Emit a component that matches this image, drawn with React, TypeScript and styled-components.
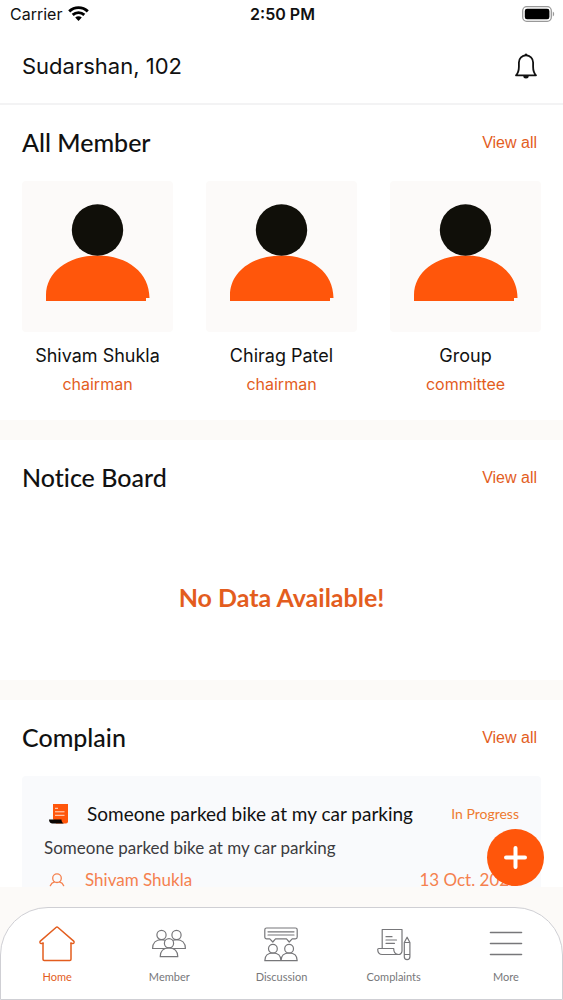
import React from "react";
import styled, { createGlobalStyle } from "styled-components";

const ORANGE = "#ff560b";
const ORANGE_TEXT = "#e35d1e";
const UI = `Inter, "Liberation Sans", sans-serif`;
const ROUNDED = `Lato, "Noto Sans", sans-serif`;

const GlobalStyle = createGlobalStyle`
  *, *::before, *::after { box-sizing: border-box; }
  body { margin: 0; background: #fcfaf8; color: #111; font-family: ${ROUNDED}; font-variant-ligatures: none; }
  h1, h2, h3, p, ul { margin: 0; padding: 0; }
  ul { list-style: none; }
  svg { display: block; }
`;

const Screen = styled.div`
  height: 100vh;
  display: flex;
  flex-direction: column;
  position: relative;
`;

const StatusBar = styled.div`
  display: grid;
  grid-template-columns: 1fr auto 1fr;
  align-items: center;
  height: 28px;
  padding: 0 8px 0 10px;
  background: #fff;
  font: 400 16px/28px ${UI};
  flex: none;
`;

const Carrier = styled.div`
  display: flex;
  align-items: center;
  gap: 6px;
`;

const Clock = styled.time`
  font-weight: 600;
`;

const Battery = styled.div`
  justify-self: end;
`;

const Header = styled.header`
  display: flex;
  align-items: center;
  justify-content: space-between;
  height: 77px;
  padding: 0 25px 0 22px;
  background: #fff;
  border-bottom: 2px solid #f3f3f4;
  flex: none;
`;

const Greeting = styled.h1`
  font: 400 22px/30px ${UI};
`;

const IconButton = styled.button`
  border: 0;
  padding: 0;
  background: none;
  color: #111;
  cursor: pointer;
`;

const Content = styled.main`
  flex: 1;
  min-height: 0;
  overflow: hidden;
  display: flex;
  flex-direction: column;
  gap: 20px;
`;

const Section = styled.section`
  background: #fff;
  padding: 20px 22px;
  flex: none;
`;

const SectionHead = styled.div`
  display: flex;
  align-items: center;
  justify-content: space-between;
  height: 36px;
  padding-right: 4px;
`;

const SectionTitle = styled.h2`
  font-size: 25px;
  line-height: 32px;
  font-weight: 500;
  padding-bottom: 2px;
`;

const ViewAll = styled.a`
  font: 400 16px/24px "Liberation Sans", Arial, sans-serif;
  color: ${ORANGE_TEXT};
  text-decoration: none;
`;

const MemberList = styled.ul`
  display: flex;
  justify-content: space-between;
  padding-top: 20px;
`;

const MemberCard = styled.li`
  width: 151px;
  text-align: center;
  font-family: ${UI};
`;

const Avatar = styled.div`
  background: #fcfaf9;
  border-radius: 4px;
`;

const MemberName = styled.h3`
  margin-top: 10px;
  font-size: 18px;
  line-height: 28px;
  font-weight: 400;
`;

const MemberRole = styled.p`
  font-size: 16px;
  line-height: 28px;
  color: ${ORANGE_TEXT};
  padding-bottom: 2px;
`;

const Empty = styled.p`
  padding: 84px 0 46px;
  text-align: center;
  font-size: 25px;
  line-height: 34px;
  font-weight: 700;
  color: ${ORANGE_TEXT};
`;

const ComplaintCard = styled.article`
  margin-top: 20px;
  padding: 22px 22px 20px;
  background: #f9fafc;
  border-radius: 4px;
`;

const ComplaintTop = styled.div`
  display: grid;
  grid-template-columns: 43px 1fr auto;
  align-items: center;
`;

const IconSlot = styled.span`
  padding-left: 5px;
`;

const ComplaintTitle = styled.h3`
  font-size: 19px;
  line-height: 32px;
  font-weight: 400;
`;

const Status = styled.span`
  font-size: 14px;
  line-height: 20px;
  color: #ee7a30;
`;

const ComplaintText = styled.p`
  font-size: 17px;
  line-height: 36px;
  color: #3c3c40;
`;

const ComplaintMeta = styled.div`
  display: grid;
  grid-template-columns: 41px 1fr auto;
  align-items: center;
  font-size: 17px;
  line-height: 28px;
  color: #f5814e;
`;

const AddButton = styled.button`
  position: absolute;
  right: 19px;
  bottom: 114px;
  width: 57px;
  height: 57px;
  display: grid;
  place-items: center;
  border: 0;
  padding: 0;
  border-radius: 50%;
  background: ${ORANGE};
  cursor: pointer;
`;

const TabArea = styled.div`
  flex: none;
  padding-top: 20px;
`;

const TabBar = styled.nav`
  display: grid;
  grid-template-columns: repeat(5, 1fr);
  height: 93px;
  border: 1px solid #cfcfd4;
  border-radius: 48px 48px 0 0;
  background: #fff;
`;

const Tab = styled.a<{ $active?: boolean }>`
  display: flex;
  flex-direction: column;
  align-items: center;
  gap: 7px;
  padding-top: 18px;
  color: ${(p) => (p.$active ? ORANGE_TEXT : "#77777a")};
  font-size: 11px;
  line-height: 16px;
  text-decoration: none;
`;

const WifiIcon = () => (
  <svg width="21" height="16" viewBox="0 0 21 16" fill="none" stroke="#000" strokeWidth="2.9">
    <path d="M1.2 5.4C6.5.4 14.5.4 19.8 5.4" />
    <path d="M4.700 8.900c3.300-3 8.300-3 11.600 0" />
    <path d="M7.200 11.500c1.900-1.700 4.700-1.700 6.600 0L10.500 15z" fill="#000" stroke="none" />
  </svg>
);

const BatteryIcon = () => (
  <svg width="33" height="16" viewBox="0 0 33 16">
    <rect x=".7" y=".7" width="28.6" height="14.6" rx="4" fill="none" stroke="#999" strokeWidth="1.3" />
    <rect x="2.8" y="2.800" width="24.6" height="10.4" rx="2.2" />
    <path d="M30.800 5.500c1.800.8 1.800 4.200 0 5z" fill="#999" />
  </svg>
);

const BellIcon = () => (
  <svg width="24" height="26" viewBox="0 0 24 26" fill="none" stroke="currentColor" strokeWidth="1.8">
    <path d="M2 22.300h20c-2.500-2.500-2.900-5-2.900-8.500V9.500a7.100 7.100 0 0 0-14.200 0v4.300c0 3.500-.4 6-2.900 8.500z" strokeLinejoin="round" />
    <path d="M10.400 2.400a1.600 1.900 0 0 1 3.200 0zM9.300 23h5.400a2.700 2.500 0 0 1-5.400 0z" fill="currentColor" stroke="none" />
  </svg>
);

const AvatarArt = () => (
  <svg width="100%" viewBox="0 0 151 151" aria-hidden="true">
    <path d="M24 120V114C24 92 45 74.500 75.500 74.500S127.500 92 127.500 117H124v3z" fill={ORANGE} />
    <circle cx="75.5" cy="49" r="25.7" fill="#100f09" />
  </svg>
);

const ScrollIcon = () => (
  <svg width="20" height="20" viewBox="0 0 20 20" aria-hidden="true">
    <path d="M4 0h15v17.500a2 2 0 0 1-2 2H7L4 15z" fill={ORANGE} />
    <path d="M0 15.500h12.500c0 2 .8 3.500 2.500 4H3.500C1.500 19.500 0 18 0 15.500z" fill="#0a0502" />
    <path d="M6 4.300h3M6 7.800h9.500M6 11.300h9.500" stroke="#ffe1cf" strokeWidth="1" />
  </svg>
);

const PersonIcon = () => (
  <svg width="16" height="14" viewBox="0 0 16 14" fill="none" stroke="currentColor" strokeWidth="1.3" strokeLinecap="round">
    <circle cx="8" cy="5.2" r="4.3" />
    <path d="M1.300 12.700c.7-2 2-3.200 4.300-3.800M14.700 12.700c-.7-2-2-3.200-4.300-3.800" />
  </svg>
);

const TabSvg = ({ children }: { children: React.ReactNode }) => (
  <svg width="36" height="36" viewBox="0 0 36 36" fill="none" stroke="currentColor" strokeWidth="1.2" strokeLinejoin="round" strokeLinecap="round" aria-hidden="true">
    {children}
  </svg>
);

const HomeIcon = () => (
  <TabSvg>
    <g strokeWidth="1.5">
      <path d="M4 17v16.200c0 .8.4 1.200 1.200 1.200h25.600c.8 0 1.200-.4 1.200-1.200V17" />
      <path d="M4 17.200c-1 .6-2.400.5-2.900-.4-.3-.7-.1-1.400.5-1.900L17 1.500c.7-.6 1.300-.6 2 0l15.400 13.400c.6.5.8 1.200.5 1.900-.5.900-1.900 1-2.900.4" />
    </g>
  </TabSvg>
);

const MemberIcon = () => (
  <TabSvg>
    <circle cx="10.5" cy="9" r="4.6" />
    <circle cx="25.5" cy="9" r="4.6" />
    <circle cx="18" cy="17.2" r="4.6" />
    <path d="M13.500 22.500H1.600c0-5.500 3.500-8.900 8.900-8.900 1.200 0 2.300.2 3.200.6M22.500 22.500h11.900c0-5.500-3.500-8.900-8.900-8.900-1.200 0-2.300.2-3.200.6" />
    <path d="M9.200 30.700c0-5.500 3.400-8.900 8.800-8.900s8.800 3.400 8.800 8.900z" />
  </TabSvg>
);

const DiscussionIcon = () => (
  <TabSvg>
    <path d="M3.600 2h28.800c1 0 1.800.8 1.800 1.800v7.200c0 1-.8 1.800-1.800 1.800h-3.200L26.200 16l-2.700-3.200h-11L9.800 16l-3-3.200H3.600c-1 0-1.800-.8-1.800-1.800V3.800c0-1 .8-1.800 1.800-1.800z" />
    <path d="M5 5.800h26M5 9h26" />
    <circle cx="9.9" cy="22.8" r="4.4" />
    <circle cx="26.1" cy="22.8" r="4.4" />
    <path d="M1.800 34.700c0-5.200 3-7.700 8.100-7.700s8.100 2.500 8.100 7.700zM18 34.700c0-5.200 3-7.700 8.100-7.700s8.100 2.500 8.100 7.700z" />
  </TabSvg>
);

const ComplaintsIcon = () => (
  <TabSvg>
    <path d="M6.200 22.500V3.500H26v21.500a3.500 3.500 0 0 1-3.500 3.500" />
    <path d="M1.700 23.500c0-.8.300-1 1-1h15c0 3.200 1 6 4.800 6H6.200C3.300 28.500 1.700 26.500 1.700 23.500z" />
    <path d="M10 10.700h6M10 14h10.500M10 17.300h8.500" />
    <path d="M28.300 16.500l2.800-5.300 2.800 5.300v14.300a2.800 2.800 0 0 1-5.600 0zM28.300 16.500h5.600M28.300 28.500h5.600" />
  </TabSvg>
);

const MoreIcon = () => (
  <TabSvg>
    <path d="M2.500 6.500h31M2.500 17.500h31M2.500 28.500h31" strokeWidth="1.6" />
  </TabSvg>
);

const members = [
  { name: "Shivam Shukla", role: "chairman" },
  { name: "Chirag Patel", role: "chairman" },
  { name: "Group", role: "committee" },
];

const tabs = [
  { label: "Home", Icon: HomeIcon },
  { label: "Member", Icon: MemberIcon },
  { label: "Discussion", Icon: DiscussionIcon },
  { label: "Complaints", Icon: ComplaintsIcon },
  { label: "More", Icon: MoreIcon },
];

const Heading = ({ title }: { title: string }) => (
  <SectionHead>
    <SectionTitle>{title}</SectionTitle>
    <ViewAll href="#">View all</ViewAll>
  </SectionHead>
);

export default function App() {
  return (
    <Screen>
      <GlobalStyle />
      <StatusBar>
        <Carrier>
          Carrier <WifiIcon />
        </Carrier>
        <Clock>2:50 PM</Clock>
        <Battery>
          <BatteryIcon />
        </Battery>
      </StatusBar>
      <Header>
        <Greeting>Sudarshan, 102</Greeting>
        <IconButton aria-label="Notifications">
          <BellIcon />
        </IconButton>
      </Header>
      <Content>
        <Section>
          <Heading title="All Member" />
          <MemberList>
            {members.map((m) => (
              <MemberCard key={m.name}>
                <Avatar>
                  <AvatarArt />
                </Avatar>
                <MemberName>{m.name}</MemberName>
                <MemberRole>{m.role}</MemberRole>
              </MemberCard>
            ))}
          </MemberList>
        </Section>
        <Section>
          <Heading title="Notice Board" />
          <Empty>No Data Available!</Empty>
        </Section>
        <Section>
          <Heading title="Complain" />
          <ComplaintCard>
            <ComplaintTop>
              <IconSlot>
                <ScrollIcon />
              </IconSlot>
              <ComplaintTitle>Someone parked bike at my car parking</ComplaintTitle>
              <Status>In Progress</Status>
            </ComplaintTop>
            <ComplaintText>Someone parked bike at my car parking</ComplaintText>
            <ComplaintMeta>
              <IconSlot>
                <PersonIcon />
              </IconSlot>
              <span>Shivam Shukla</span>
              <time>13 Oct. 2021</time>
            </ComplaintMeta>
          </ComplaintCard>
        </Section>
      </Content>
      <TabArea>
        <TabBar>
          {tabs.map(({ label, Icon }, i) => (
            <Tab key={label} href="#" $active={i === 0} aria-current={i === 0 ? "page" : undefined}>
              <Icon />
              {label}
            </Tab>
          ))}
        </TabBar>
      </TabArea>
      <AddButton aria-label="Add">
        <svg width="25" height="25" viewBox="0 0 25 25" stroke="#fff" strokeWidth="4" strokeLinecap="round">
          <path d="M12.500 3v19M3 12.500h19" />
        </svg>
      </AddButton>
    </Screen>
  );
}
